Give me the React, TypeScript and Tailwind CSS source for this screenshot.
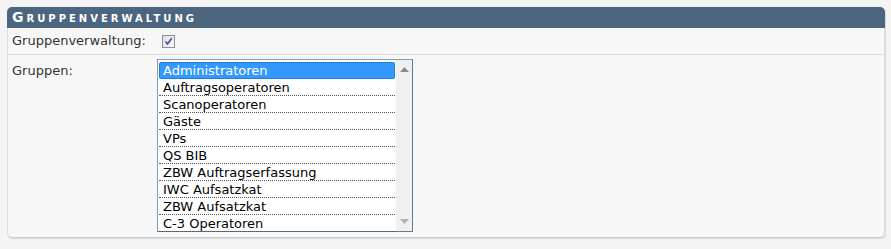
import React from "react";

const groups = [
  "Administratoren",
  "Auftragsoperatoren",
  "Scanoperatoren",
  "Gäste",
  "VPs",
  "QS BIB",
  "ZBW Auftragserfassung",
  "IWC Aufsatzkat",
  "ZBW Aufsatzkat",
  "C-3 Operatoren",
];

function CheckBox() {
  return (
    <span className="inline-flex h-[13px] w-[13px] items-center justify-center border border-[#8e8f8f] bg-gradient-to-br from-[#dcdcdc] to-[#fafafa]">
      <svg width="9" height="9" viewBox="0 0 9 9">
        <path d="M1.5 4.5 L3.5 7 L7.8 1.2" fill="none" stroke="#3b4fa0" strokeWidth="1.6" />
      </svg>
    </span>
  );
}

function GroupList() {
  return (
    <div className="flex h-[173px] w-[256px] border border-[#7f9db9] border-r-[#5e7c9b] border-b-[#5e7c9b] bg-white">
      <div className="flex flex-1 flex-col px-[1px] pt-[2px]">
        {groups.map((g, i) => (
          <div
            key={g}
            className={
              i === 0
                ? "h-[17px] rounded-[2px] border border-dotted border-[#1b5fb0] bg-[#3399ff] pl-[3px] leading-[15px] text-white"
                : "h-[17px] border-b border-dotted border-[#555] pl-[4px] leading-[17px] text-black"
            }
          >
            {g}
          </div>
        ))}
      </div>
      <div className="flex w-[16px] flex-col items-center justify-between bg-[#f0f0f0] py-[7px]">
        <svg width="9" height="5" viewBox="0 0 9 5">
          <path d="M0 5 L4.5 0 L9 5 Z" fill="#8a8a8a" />
        </svg>
        <svg width="9" height="5" viewBox="0 0 9 5">
          <path d="M0 0 L4.5 5 L9 0 Z" fill="#b0b0b0" />
        </svg>
      </div>
    </div>
  );
}

export default function App() {
  return (
    <div className="min-h-[249px] bg-[#f4f4f4] pl-[7px] pr-[6px] pt-[7px] font-['DejaVu_Sans',Verdana,sans-serif] text-[13px]">
      <div className="rounded-[5px] border-b border-[#c9ced4] shadow-[1px_1px_1px_#d6dadf]">
        <div className="flex h-[21px] items-center rounded-t-[5px] bg-[#4c6680] pl-[5px]">
          <span className="text-[14px] font-bold tracking-[3px] text-white [font-variant:small-caps]">
            Gruppenverwaltung
          </span>
        </div>
        <div className="rounded-b-[5px] border-x border-[#dcdcdc] bg-[#f7f7f7]">
          <div className="flex h-[27px] items-center border-b border-[#dedede] pl-[4px]">
            <span className="w-[150px] text-[#333]">Gruppenverwaltung:</span>
            <CheckBox />
          </div>
          <div className="flex pb-[5px] pl-[4px] pt-[4px]">
            <span className="w-[145px] pt-[2px] text-[#333]">Gruppen:</span>
            <GroupList />
          </div>
        </div>
      </div>
    </div>
  );
}
